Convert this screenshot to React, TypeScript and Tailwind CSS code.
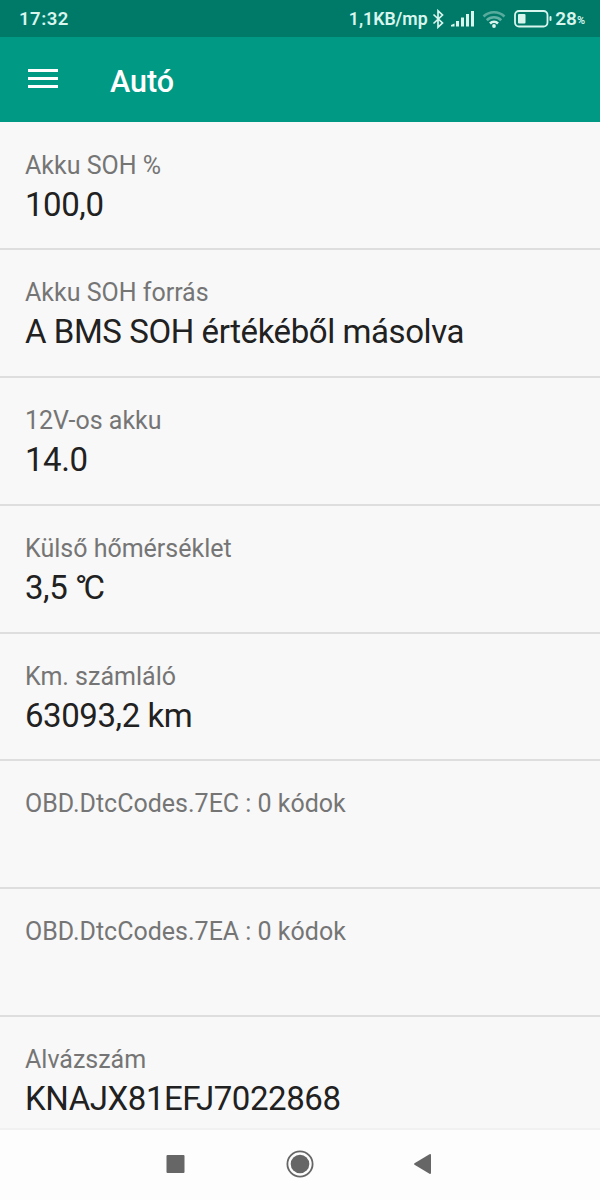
const ROWS = [
  { label: 'Akku SOH %', value: '100,0' },
  { label: 'Akku SOH forrás', value: 'A BMS SOH értékéből másolva' },
  { label: '12V-os akku', value: '14.0' },
  { label: 'Külső hőmérséklet', value: '3,5 ', degrees: true },
  { label: 'Km. számláló', value: '63093,2 km' },
  { label: 'OBD.DtcCodes.7EC : 0 kódok', value: '' },
  { label: 'OBD.DtcCodes.7EA : 0 kódok', value: '' },
  { label: 'Alvázszám', value: 'KNAJX81EFJ7022868' },
]

function StatusBar() {
  return (
    <div className="flex h-[37px] shrink-0 items-center bg-[#007a68] pr-[15px] pl-[19px] text-[#d8f5ee]">
      <span className="pt-0.5 text-[18.5px] font-semibold tracking-[0.5px]">17:32</span>
      <span className="ml-auto pt-px text-[17.7px] font-semibold">1,1KB/mp</span>
      <svg className="ml-[3px] h-5 w-3.5" viewBox="0 0 14 20" fill="none" stroke="currentColor" strokeWidth="1.7">
        <path d="M2.500 5.500 11.500 14l-4.500 4.200V1.800l4.500 4.200-9 8.500" />
      </svg>
      <svg className="ml-[6px] h-5 w-6" viewBox="0 0 24 20" fill="currentColor">
        <path d="M0 17.500v-1.500l3.500-1.500v3z" />
        <rect x="5" y="12" width="3" height="5.500" />
        <rect x="10" y="8.500" width="3" height="9" />
        <rect x="15" y="5" width="3" height="12.500" />
        <rect x="20" y="2" width="3" height="15.500" />
      </svg>
      <svg className="ml-[7px] h-5 w-6" viewBox="0 0 24 20" fill="none" stroke="currentColor" strokeWidth="2.600">
        <path d="M1.500 7.500a15 15 0 0 1 21 0" opacity="0.4" />
        <path d="M4.800 11.200a10.300 10.300 0 0 1 14.400 0" opacity="0.45" />
        <path d="M8 14.500a5.800 5.800 0 0 1 8 0" />
        <circle cx="12" cy="17" r="1.900" fill="currentColor" stroke="none" />
      </svg>
      <svg className="ml-2 h-5 w-[38px]" viewBox="0 0 38 20" fill="none">
        <rect x="1" y="2" width="32.500" height="15.500" rx="4" stroke="currentColor" strokeWidth="1.800" />
        <rect x="4" y="5" width="7.500" height="9.500" rx="1" fill="currentColor" />
        <rect x="35.500" y="7" width="2" height="5" rx="1" fill="currentColor" />
      </svg>
      <span className="ml-[3.5px] pt-0.5 text-[19px] font-semibold">28</span>
      <span className="pt-1.5 text-[11px] font-semibold">%</span>
    </div>
  )
}

function AppBar() {
  return (
    <header className="flex h-[85px] shrink-0 items-center bg-[#009984] pl-7 text-white">
      <button aria-label="Menu" className="mb-[3px] flex w-[30px] flex-col gap-[5px]">
        <span className="h-[3px] bg-white" />
        <span className="h-[3px] bg-white" />
        <span className="h-[3px] bg-white" />
      </button>
      <h1 className="ml-[52px] pt-1 text-[30.5px] font-medium">Autó</h1>
    </header>
  )
}

function NavBar() {
  return (
    <nav className="flex h-[72px] shrink-0 justify-center gap-[94px] border-t-2 border-[#f1f1f1] bg-[#fdfdfd] pt-[19px] pl-1 text-[#666]">
      <svg className="size-8" viewBox="0 0 32 32" fill="currentColor">
        <rect x="6.500" y="6" width="18" height="18" rx="1" />
      </svg>
      <svg className="size-8" viewBox="0 0 32 32" fill="currentColor">
        <circle cx="14" cy="15" r="9.300" />
        <circle cx="14" cy="15" r="12.600" fill="none" stroke="currentColor" strokeWidth="1.800" />
      </svg>
      <svg className="size-8" viewBox="0 0 32 32" fill="currentColor">
        <path d="M2.500 14.300 17.500 5.300q1.500-.8 1.500.9v17.600q0 1.700-1.500.9L2.500 15.700q-1-.7 0-1.400z" />
      </svg>
    </nav>
  )
}

export default function App() {
  return (
    <div className="flex h-[1200px] w-[600px] flex-col overflow-hidden bg-[#f8f8f8] font-['Roboto',sans-serif]">
      <StatusBar />
      <AppBar />
      <main className="min-h-0 flex-1 overflow-hidden pt-[0.5px]">
        {ROWS.map((row) => (
          <section key={row.label} className="h-[127.75px] border-b-2 border-[#dedede] px-[25px] pt-7">
            <h2 className="text-[25px] leading-[30px] font-normal text-[#757575]">{row.label}</h2>
            <p className="mt-1 text-[33px] leading-[40px] tracking-[-0.43px] text-[#212121]">
              {row.value}
              {row.degrees && <span className="tracking-[-4px]">°C</span>}
            </p>
          </section>
        ))}
      </main>
      <NavBar />
    </div>
  )
}
